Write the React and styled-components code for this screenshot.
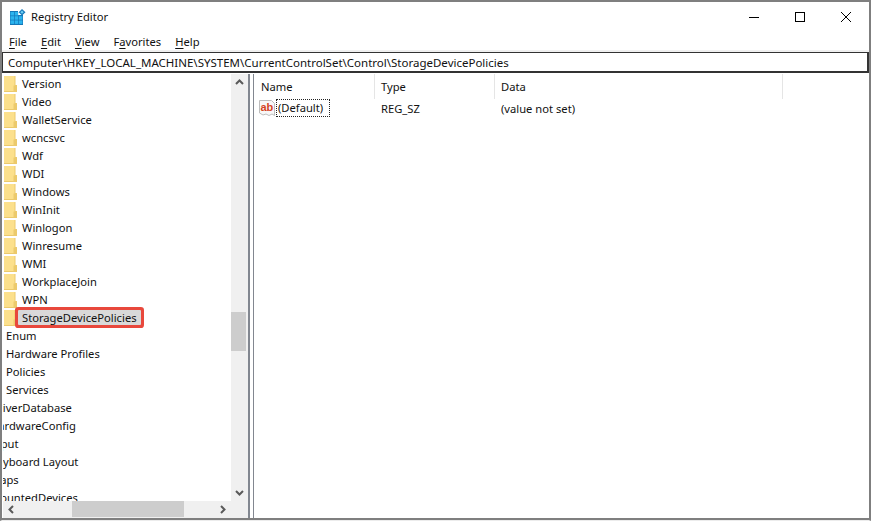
import React from 'react';
import styled, { createGlobalStyle } from 'styled-components';

const GlobalStyle = createGlobalStyle`
  html, body {
    margin: 0;
    padding: 0;
    background: #fff;
  }
`;

const Window = styled.div`
  width: 871px;
  height: 521px;
  box-sizing: border-box;
  border: 2px solid #7f7f7f;
  border-bottom: 1px solid #ececec;
  background: #fff;
  display: flex;
  flex-direction: column;
  overflow: hidden;
  font-family: "Noto Sans", "Open Sans", sans-serif;
  font-size: 11.2px;
  line-height: 15px;
  color: #111;
`;

const TitleBar = styled.div`
  height: 29px;
  flex: none;
  display: flex;
  align-items: center;
  padding-left: 8px;
`;

const Title = styled.div`
  margin-left: 5px;
  flex: 1;
`;

const WinButton = styled.div`
  width: 46px;
  display: flex;
  justify-content: center;
  align-items: center;
`;

const MenuBar = styled.div`
  height: 21px;
  flex: none;
  box-sizing: border-box;
  border-bottom: 2px solid #f0f0f0;
  display: flex;
  align-items: center;
  padding: 1px 0 0 7px;
  gap: 14px;
`;

const MenuItem = styled.span`
  u {
    text-underline-offset: 2px;
  }
`;

const AddressBar = styled.div`
  height: 21px;
  flex: none;
  box-sizing: border-box;
  border: 1px solid #333;
  border-width: 1px 2px 2px 1px;
  display: flex;
  align-items: center;
  padding-left: 5px;
  white-space: nowrap;
  font-size: 11.5px;
`;

const Panes = styled.div`
  flex: 1;
  min-height: 0;
  display: flex;
  border-bottom: 2px solid #7f7f7f;
  padding: 1px 0 0 1px;
`;

const TreePane = styled.div`
  width: 245px;
  flex: none;
  display: flex;
  flex-direction: column;
  border-right: 2px solid #828790;
`;

const TreeBody = styled.div`
  flex: 1;
  min-height: 0;
  display: flex;
`;

const TreeList = styled.div`
  flex: 1;
  min-width: 0;
  overflow: hidden;
  padding-top: 1px;
`;

const TreeRow = styled.div`
  height: 18px;
  display: flex;
  align-items: center;
  white-space: nowrap;
  margin-left: ${(p) => p.$indent}px;
`;

const RowLabel = styled.span`
  position: relative;
  top: -1px;
  margin-left: ${(p) => (p.$folder ? 3 : 0)}px;
  padding: 0 2px;
`;

const Highlight = styled.span`
  position: relative;
  display: inline-block;
  margin-left: -4px;
  padding: 0 4px;
  background: #d9d9d9;
  box-shadow: 0 0 0 3px #e8483c;
  border-radius: 1px;
`;

const VScroll = styled.div`
  width: 17px;
  flex: none;
  background: #f0f0f0;
  display: flex;
  flex-direction: column;
  justify-content: space-between;
  position: relative;
`;

const VThumb = styled.div`
  position: absolute;
  left: 0;
  right: 2px;
  top: 238px;
  height: 39px;
  background: #cdcdcd;
`;

const HScroll = styled.div`
  height: 17px;
  flex: none;
  box-sizing: border-box;
  padding-right: 17px;
  background: #f0f0f0;
  display: flex;
  justify-content: space-between;
  align-items: center;
  position: relative;
`;

const HThumb = styled.div`
  position: absolute;
  left: 69px;
  top: 0;
  bottom: 1px;
  width: 112px;
  background: #cdcdcd;
`;

const Arrow = styled.div`
  width: 17px;
  height: 17px;
  display: flex;
  align-items: center;
  justify-content: center;
`;

const Gap = styled.div`
  width: 3px;
  flex: none;
`;

const ListPane = styled.div`
  flex: 1;
  min-width: 0;
  border-left: 1px solid #828790;
  display: flex;
  flex-direction: column;
`;

const HeaderRow = styled.div`
  height: 25px;
  flex: none;
  display: flex;
`;

const HeaderCell = styled.div`
  width: ${(p) => p.$w}px;
  box-sizing: border-box;
  padding-left: ${(p) => p.$pad}px;
  display: flex;
  align-items: center;
  border-right: 1px solid #e5e5e5;
`;

const DataRow = styled.div`
  height: 18px;
  display: flex;
  align-items: center;
`;

const DataCell = styled.div`
  width: ${(p) => p.$w}px;
  box-sizing: border-box;
  padding-left: ${(p) => p.$pad}px;
  display: flex;
  align-items: center;
`;

const Focused = styled.span`
  box-sizing: border-box;
  height: 18px;
  line-height: 16px;
  border: 1px dotted #222;
  padding: 0 6px 0 1px;
  margin-left: 1px;
`;

const RegIcon = () => (
  <svg width="16" height="16" viewBox="0 0 16 16" style={{ flex: 'none' }}>
    <path
      d="M0.5 0.5H12.5L15.5 3.5V15.5L13 14L10 15.5L7 14L4 15L0.5 13Z"
      fill="#f7f7f7"
      stroke="#bdbdbd"
    />
    <text x="1.5" y="11" fontSize="11" fontWeight="700" fontFamily="Liberation Sans, sans-serif" fill="#d4421f">ab</text>
  </svg>
);

const AppIcon = () => (
  <svg width="16" height="16" viewBox="0 0 16 16" style={{ flex: 'none' }}>
    <path d="M0 2h8v4h5v10H0z" fill="#1577b8" />
    <g fill="#2cb4ee">
      <rect x="0.5" y="3" width="3.5" height="3.5" />
      <rect x="4.7" y="3" width="3.5" height="3.5" />
      <rect x="0.5" y="7.2" width="3.5" height="3.5" />
      <rect x="4.7" y="7.2" width="3.5" height="3.5" />
      <rect x="8.9" y="7.2" width="3.5" height="3.5" />
      <rect x="0.5" y="11.4" width="3.5" height="3.5" />
      <rect x="4.7" y="11.4" width="3.5" height="3.5" />
      <rect x="8.9" y="11.4" width="3.5" height="3.5" />
    </g>
    <path d="M12 0l3.5 3.2L12 6.5 8.7 3.2z" fill="#1577b8" />
    <path d="M12 1.6l1.7 1.6L12 4.8l-1.6-1.6z" fill="#6fd0f5" />
  </svg>
);

const FolderIcon = () => (
  <svg width="13" height="16" viewBox="0 0 13 16" style={{ flex: 'none' }}>
    <path d="M0 0h11v9h2v7H0z" fill="#fce08c" />
    <path d="M10.5 0h1v9h1.5v7H0v-1h9.5v-5.500h1z" fill="#ecca6c" />
  </svg>
);

const Chevron = ({ dir }) => {
  const paths = {
    up: 'M1 6L4.500 2.500 8 6',
    down: 'M1 3l3.500 3.500L8 3',
    left: 'M6 1L2.500 4.500 6 8',
    right: 'M3 1l3.500 3.500L3 8',
  };
  return (
    <svg width="9" height="9" viewBox="0 0 9 9">
      <path d={paths[dir]} fill="none" stroke="#5a5a5a" strokeWidth="2" />
    </svg>
  );
};

const folders = ['Version', 'Video', 'WalletService', 'wcncsvc', 'Wdf', 'WDI', 'Windows', 'WinInit', 'Winlogon', 'Winresume', 'WMI', 'WorkplaceJoin', 'WPN'];
const services = ['Enum', 'Hardware Profiles', 'Policies', 'Services'];
const rootKeys = ['DriverDatabase', 'HardwareConfig', 'Input', 'Keyboard Layout', 'Maps', 'MountedDevices'];
const menus = [['File', 0], ['Edit', 0], ['View', 0], ['Favorites', 1], ['Help', 0]];

export default function App() {
  return (
    <>
      <GlobalStyle />
      <Window>
        <TitleBar>
          <AppIcon />
          <Title>Registry Editor</Title>
          <WinButton>
            <svg width="10" height="10"><path d="M0 5.5h10" stroke="#000" /></svg>
          </WinButton>
          <WinButton>
            <svg width="10" height="10"><rect x="0.5" y="0.5" width="9" height="9" fill="none" stroke="#000" /></svg>
          </WinButton>
          <WinButton>
            <svg width="10" height="10"><path d="M0 0l10 10M10 0L0 10" stroke="#000" /></svg>
          </WinButton>
        </TitleBar>
        <MenuBar>
          {menus.map(([name, at]) => (
            <MenuItem key={name}>
              {name.slice(0, at)}<u>{name[at]}</u>{name.slice(at + 1)}
            </MenuItem>
          ))}
        </MenuBar>
        <AddressBar>Computer\HKEY_LOCAL_MACHINE\SYSTEM\CurrentControlSet\Control\StorageDevicePolicies</AddressBar>
        <Panes>
          <TreePane>
            <TreeBody>
              <TreeList>
                {folders.map((f) => (
                  <TreeRow key={f} $indent={1}>
                    <FolderIcon />
                    <RowLabel $folder>{f}</RowLabel>
                  </TreeRow>
                ))}
                <TreeRow $indent={1}>
                  <FolderIcon />
                  <RowLabel $folder><Highlight>StorageDevicePolicies</Highlight></RowLabel>
                </TreeRow>
                {services.map((r) => (
                  <TreeRow key={r} $indent={1}>
                    <RowLabel>{r}</RowLabel>
                  </TreeRow>
                ))}
                {rootKeys.map((r) => (
                  <TreeRow key={r} $indent={-15}>
                    <RowLabel>{r}</RowLabel>
                  </TreeRow>
                ))}
              </TreeList>
              <VScroll>
                <Arrow><Chevron dir="up" /></Arrow>
                <VThumb />
                <Arrow><Chevron dir="down" /></Arrow>
              </VScroll>
            </TreeBody>
            <HScroll>
              <Arrow><Chevron dir="left" /></Arrow>
              <HThumb />
              <Arrow><Chevron dir="right" /></Arrow>
            </HScroll>
          </TreePane>
          <Gap />
          <ListPane>
            <HeaderRow>
              <HeaderCell $w={121} $pad={7}>Name</HeaderCell>
              <HeaderCell $w={120} $pad={6}>Type</HeaderCell>
              <HeaderCell $w={288} $pad={6}>Data</HeaderCell>
            </HeaderRow>
            <DataRow>
              <DataCell $w={121} $pad={5}><RegIcon /><Focused>(Default)</Focused></DataCell>
              <DataCell $w={120} $pad={6}>REG_SZ</DataCell>
              <DataCell $w={288} $pad={6}>(value not set)</DataCell>
            </DataRow>
          </ListPane>
        </Panes>
      </Window>
    </>
  );
}
